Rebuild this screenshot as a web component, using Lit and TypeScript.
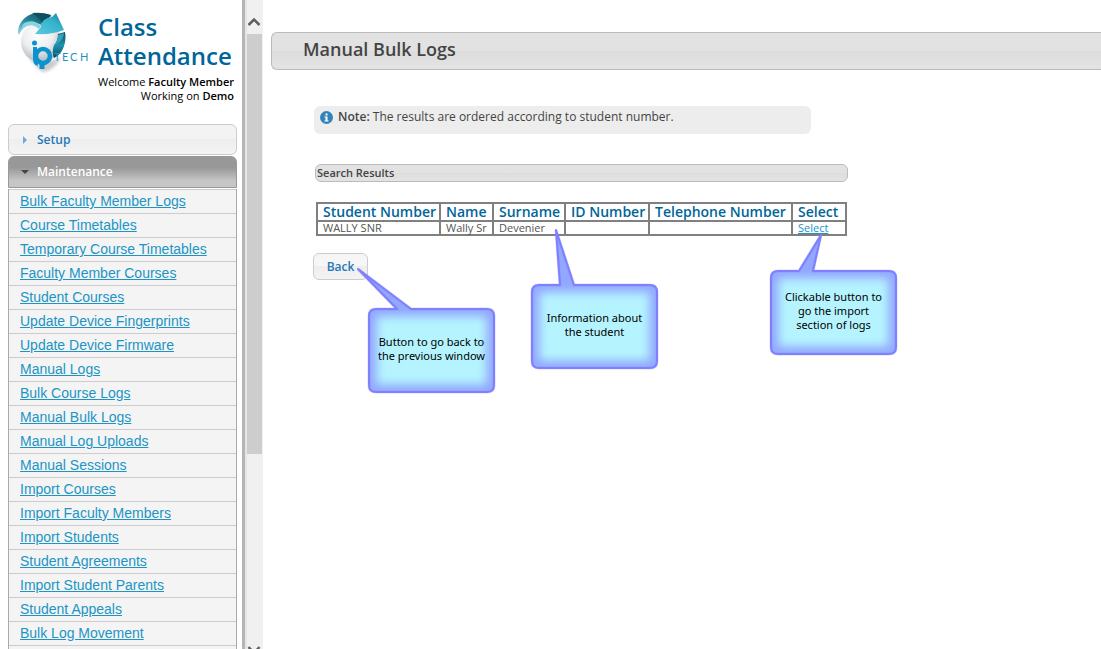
import { LitElement, html, css, svg } from "lit";
import { customElement, property } from "lit/decorators.js";

const MENU = [
  "Bulk Faculty Member Logs",
  "Course Timetables",
  "Temporary Course Timetables",
  "Faculty Member Courses",
  "Student Courses",
  "Update Device Fingerprints",
  "Update Device Firmware",
  "Manual Logs",
  "Bulk Course Logs",
  "Manual Bulk Logs",
  "Manual Log Uploads",
  "Manual Sessions",
  "Import Courses",
  "Import Faculty Members",
  "Import Students",
  "Student Agreements",
  "Import Student Parents",
  "Student Appeals",
  "Bulk Log Movement",
];

@customElement("brand-logo")
class BrandLogo extends LitElement {
  static styles = css`
    :host {
      display: block;
    }
    .art {
      display: block;
      font-family: "Lato", "Liberation Sans", sans-serif;
    }
  `;

  render() {
    return html`
      <svg class="art" width="76" height="64" viewBox="0 0 76 64" role="img" aria-label="ip Tech">
        <defs>
          <radialGradient id="ball" cx="42%" cy="32%" r="62%">
            <stop offset="0" stop-color="#ffffff" />
            <stop offset="0.6" stop-color="#eceef0" />
            <stop offset="1" stop-color="#bfc3c6" />
          </radialGradient>
          <linearGradient id="head" x1="0" y1="1" x2="1" y2="0">
            <stop offset="0" stop-color="#5cc9df" />
            <stop offset="0.6" stop-color="#35b2cd" />
            <stop offset="1" stop-color="#14829c" />
          </linearGradient>
          <linearGradient id="band" x1="0" y1="1" x2="1" y2="0">
            <stop offset="0" stop-color="#a6dde8" />
            <stop offset="0.4" stop-color="#2c8fa6" />
            <stop offset="1" stop-color="#0a3f4e" />
          </linearGradient>
          <linearGradient id="edge" x1="0" y1="0" x2="0" y2="1">
            <stop offset="0" stop-color="#0b4c5d" />
            <stop offset="0.5" stop-color="#1f93ae" />
            <stop offset="1" stop-color="#0a4a5b" />
          </linearGradient>
          <filter id="soft" x="-30%" y="-30%" width="160%" height="160%">
            <feGaussianBlur stdDeviation="1.6" />
          </filter>
        </defs>
        <path d="M6 34 Q10 50 24 61 Q34 62 44 46 Q30 56 6 34Z" fill="#a8acae" opacity="0.6" filter="url(#soft)" />
        <circle cx="23" cy="31" r="20" fill="url(#ball)" />
        <path d="M0 22 C0 10 10 2 20 2 C26 2 30 3 33 4 L25 15 C17 9 6 12 1 24Z" fill="url(#band)" />
        <path d="M5 13 C10 9 18 9 23 15 L21 18 C15 12 8 13 2 21Z" fill="#86d3e2" />
        <path d="M17 23 L23 16 C22 11 26 7 34 6 L38 2 L46 19 Q34 24 17 23Z" fill="url(#head)" />
        <path d="M14 2 C21 1 29 2 34 5 C29 7 25 9 24 12 C22 8 19 5 14 2Z" fill="#0c4c5c" opacity="0.8" />
        <path d="M40 23 L47 21 C49 31 45 43 36 47 C34 42 35 38 36 34 Q40 30 40 23Z" fill="url(#edge)" />
        <path d="M40 24 L46 22 Q46 29 37 34 Q40 30 40 24Z" fill="#3db2ca" opacity="0.8" />
        <g fill="none" stroke="#0c93cf">
          <path d="M17 36 V48 Q17 52 20 53" stroke-width="4" />
          <circle cx="25" cy="45" r="7" stroke-width="4.5" />
          <path d="M24 50 V58" stroke-width="5" />
        </g>
        <circle cx="16.500" cy="32" r="2.500" fill="#0c93cf" />
        <g fill="#1a94bd" font-size="11">
          <text x="36" y="50">T</text>
          <text x="44" y="50">E</text>
          <text x="52" y="50">C</text>
          <text x="62" y="50">H</text>
        </g>
      </svg>
    `;
  }
}

@customElement("note-callout")
class NoteCallout extends LitElement {
  @property() shape = "";

  static styles = css`
    :host {
      display: grid;
      width: 127px;
      height: 85px;
      position: absolute;
      pointer-events: none;
    }
    .shape,
    .label {
      grid-area: 1 / 1;
    }
    .shape {
      overflow: visible;
    }
    .label {
      align-self: center;
      z-index: 1;
      padding-bottom: 4px;
      text-align: center;
      font: 11px/14px "Noto Sans", "Open Sans", sans-serif;
      color: #000;
    }
  `;

  render() {
    const d = this.shape;
    return html`
      <svg class="shape" width="127" height="85" viewBox="0 0 127 85" aria-hidden="true">
        <defs>
          <clipPath id="inside"><path d=${d} /></clipPath>
          <filter id="glow" filterUnits="userSpaceOnUse" x="-40" y="-80" width="210" height="200">
            <feGaussianBlur stdDeviation="5" />
          </filter>
        </defs>
        ${svg`
          <path d=${d} fill="#b5f4ff" />
          <g clip-path="url(#inside)">
            <path d=${d} fill="none" stroke="#8a94ff" stroke-opacity="0.8" stroke-width="15" filter="url(#glow)" />
          </g>
          <path d=${d} fill="none" stroke="#8080ff" stroke-opacity="0.3" stroke-width="3" />
          <path d=${d} fill="none" stroke="#8080ff" stroke-width="2" stroke-linejoin="round" />
        `}
      </svg>
      <span class="label"><slot></slot></span>
    `;
  }
}

/** Rounded 127 x 85 box whose top edge opens into a pointer. */
const bubble = (left: number, right: number, tipX: number, tipY: number) =>
  `M8 1 H${left} L${tipX} ${tipY} L${right} 1 H119 Q126 1 126 8 V77 Q126 84 119 84 H8 Q1 84 1 77 V8 Q1 1 8 1Z`;

@customElement("side-panel")
class SidePanel extends LitElement {
  static styles = css`
    :host {
      display: flex;
      flex: none;
      overflow: hidden;
    }
    .column {
      width: 237px;
      padding: 11px 0 0 8px;
      box-sizing: border-box;
      margin-right: 5px;
    }
    .head {
      display: grid;
      grid-template-columns: 80px 1fr;
      padding: 0 3px 0 10px;
      margin-bottom: 21px;
      height: 92px;
    }
    .name {
      margin: 1px 0 0;
      font: 600 24px/29px "Open Sans", "Noto Sans", sans-serif;
      color: #069;
    }
    .who {
      grid-column: 1 / -1;
      margin: 0;
      font: 11px/14px "Open Sans", "Noto Sans", sans-serif;
      text-align: right;
      color: #000;
    }
    .strong {
      font-weight: 600;
    }
    .section {
      display: flex;
      align-items: center;
      gap: 8px;
      width: 100%;
      height: 31px;
      padding: 0 12px;
      margin: 0 0 1px;
      border: 1px solid #ccc;
      border-radius: 6px;
      background: linear-gradient(#f3f3f3 50%, #eeeeee 50%, #f4f4f4);
      font: 600 12px/18px "Open Sans", "Noto Sans", sans-serif;
      color: #2779b7;
    }
    .open {
      height: 32px;
      border-color: #999;
      border-radius: 6px 6px 0 0;
      background: linear-gradient(#989898 35%, #c6c6c6 80%);
      color: #fff;
    }
    .menu {
      list-style: none;
      margin: 0;
      padding: 0 0 8px;
      border: solid #aaa;
      border-width: 0 1px;
      background: #f4f4f4;
    }
    .item {
      height: 23px;
      padding-left: 11px;
      border-top: 1px solid #ccc;
      font: 14px/23px "Liberation Sans", Arial, sans-serif;
      white-space: nowrap;
    }
    .item:last-child {
      border-bottom: 1px solid #ccc;
    }
    .link {
      color: #1c94c4;
    }
    .divider {
      width: 5px;
      box-sizing: border-box;
      background: #b5b5b5;
      border-right: 2px solid #e6e6e6;
    }
    .track {
      width: 16px;
      background: #f0f0f0;
      display: flex;
      flex-direction: column;
      overflow: hidden;
    }
    .arrow {
      flex: none;
      display: block;
    }
    .thumb {
      flex: 0 0 64.7%;
      margin-right: 1px;
      background: #cdcdcd;
    }
    .space {
      flex: 1;
    }
  `;

  render() {
    return html`
      <div class="column">
        <header class="head">
          <brand-logo></brand-logo>
          <h1 class="name">Class Attendance</h1>
          <p class="who">
            Welcome <span class="strong">Faculty Member</span><br />Working on
            <span class="strong">Demo</span>
          </p>
        </header>
        <nav>
          <button class="section" type="button" aria-expanded="false">
            <svg width="8" height="8" aria-hidden="true"><path d="M2 0 L6 4 L2 8Z" fill="#72a7d8" /></svg>
            Setup
          </button>
          <button class="section open" type="button" aria-expanded="true">
            <svg width="8" height="8" aria-hidden="true"><path d="M0 2 H8 L4 6Z" fill="#454545" /></svg>
            Maintenance
          </button>
          <ul class="menu">
            ${MENU.map((m) => html`<li class="item"><a class="link" href="#">${m}</a></li>`)}
          </ul>
        </nav>
      </div>
      <div class="divider"></div>
      <div class="track" aria-hidden="true">
        <svg class="arrow" width="15" height="34"><path d="M1.500 25 L7 19.500 L12.500 25" fill="none" stroke="#606060" stroke-width="2.500" /></svg>
        <div class="thumb"></div>
        <div class="space"></div>
        <svg class="arrow" width="15" height="3"><path d="M1.500 1 L7 7 L12.500 1" fill="none" stroke="#606060" stroke-width="2.500" /></svg>
      </div>
    `;
  }
}

@customElement("app-root")
class AppRoot extends LitElement {
  static styles = css`
    :host {
      display: flex;
      height: 100vh;
      overflow: hidden;
      background: #fff;
      font-family: "Open Sans", "Noto Sans", sans-serif;
      color: #444;
    }
    .main {
      flex: 1;
      min-width: 0;
      padding: 32px 0 0 8px;
      overflow: hidden;
    }
    .title {
      margin: 0;
      padding: 0 31px 3px;
      border: 1px solid #bbb;
      border-right: 0;
      border-radius: 6px 0 0 6px;
      background: linear-gradient(#e2e2e2 50%, #dddddd 50%, #e3e3e3);
      font-size: 18px;
      line-height: 33px;
      font-weight: 600;
    }
    .body {
      position: relative;
      padding: 36px 0 0 43px;
    }
    .note {
      display: flex;
      align-items: center;
      gap: 5px;
      width: 486px;
      margin: 0 0 30px;
      padding: 0 5px 6px 6px;
      border-radius: 6px;
      background: #ededed;
      font-size: 12px;
      line-height: 22px;
    }
    .strong {
      font-weight: 600;
    }
    .results {
      width: 533px;
      box-sizing: border-box;
      margin: 0 0 20px 1px;
      padding: 0 1px;
      border: 1px solid #bbb;
      border-radius: 6px;
      background: linear-gradient(#e2e2e2 50%, #dddddd 50%, #e3e3e3);
      font-size: 11px;
      line-height: 16px;
      font-weight: 600;
    }
    .grid {
      border-collapse: collapse;
      table-layout: fixed;
      width: 531px;
      margin: 0 0 17px 2px;
    }
    .th,
    .td {
      box-sizing: border-box;
      border: 2px solid #808080;
      padding: 0 0 0 5px;
      text-align: left;
      white-space: nowrap;
    }
    .th {
      font-size: 14px;
      line-height: 16px;
      font-weight: 600;
      color: #069;
    }
    .td {
      font-size: 11px;
      line-height: 12px;
      color: #555;
    }
    .number {
      width: 123px;
    }
    .first {
      width: 53px;
    }
    .surname {
      width: 72px;
    }
    .ident {
      width: 84px;
    }
    .phone {
      width: 143px;
    }
    .link {
      color: #1c94c4;
    }
    .back {
      display: block;
      width: 55px;
      height: 27px;
      margin-left: -1px;
      padding: 0;
      border: 1px solid #ccc;
      border-radius: 6px;
      background: linear-gradient(#f6f6f6 50%, #eeeeee 50%, #f4f4f4);
      font: 600 12px/25px "Open Sans", "Noto Sans", sans-serif;
      color: #2779b7;
    }
    .for-back {
      left: 97px;
      top: 238px;
    }
    .for-student {
      left: 260px;
      top: 214px;
    }
    .for-select {
      left: 499px;
      top: 200px;
    }
  `;

  render() {
    return html`
      <side-panel></side-panel>
      <main class="main">
        <h2 class="title">Manual Bulk Logs</h2>
        <div class="body">
          <p class="note">
            <svg width="13" height="13" aria-hidden="true">
              <circle cx="6.500" cy="6.500" r="6.500" fill="#3383bb" />
              <path d="M5.500 2.500 H7.500 V4.500 H5.500Z M4.500 5.500 H7.500 V9.500 H8.500 V10.500 H4.500 V9.500 H5.500 V6.500 H4.500Z" fill="#fff" />
            </svg>
            <span><span class="strong">Note:</span> The results are ordered according to student number.</span>
          </p>
          <h3 class="results">Search Results</h3>
          <table class="grid">
            <thead>
              <tr>
                <th class="th number" scope="col">Student Number</th>
                <th class="th first" scope="col">Name</th>
                <th class="th surname" scope="col">Surname</th>
                <th class="th ident" scope="col">ID Number</th>
                <th class="th phone" scope="col">Telephone Number</th>
                <th class="th" scope="col">Select</th>
              </tr>
            </thead>
            <tbody>
              <tr>
                <td class="td">WALLY SNR</td>
                <td class="td">Wally Sr</td>
                <td class="td">Devenier</td>
                <td class="td"></td>
                <td class="td"></td>
                <td class="td"><a class="link" href="#">Select</a></td>
              </tr>
            </tbody>
          </table>
          <button class="back" type="button">Back</button>
          <note-callout class="for-back" shape=${bubble(29, 43, -10, -39)}
            >Button to go back to<br />the previous window</note-callout
          >
          <note-callout class="for-student" shape=${bubble(29, 43, 25, -54)}
            >Information about<br />the student</note-callout
          >
          <note-callout class="for-select" shape=${bubble(29, 43, 51, -35)}
            >Clickable button to<br />go the import<br />section of logs</note-callout
          >
        </div>
      </main>
    `;
  }
}
